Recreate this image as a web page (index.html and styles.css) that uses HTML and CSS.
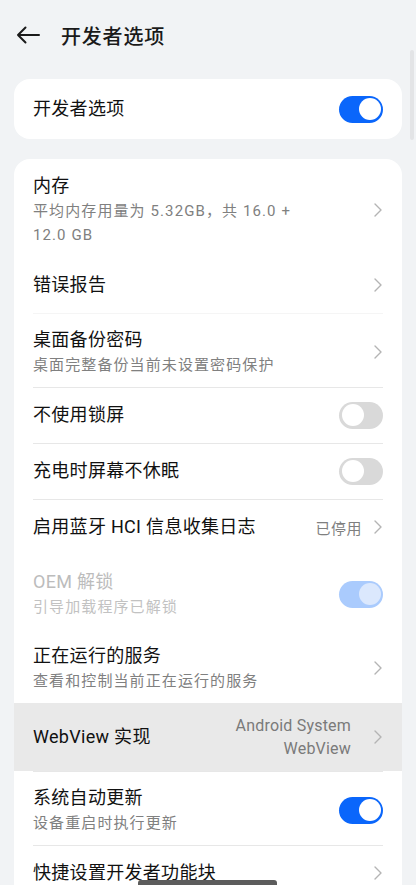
FILE: index.html
```html
<!DOCTYPE html>
<html lang="zh-CN">
<head>
    <meta charset="UTF-8">
    <meta name="viewport" content="width=device-width, initial-scale=1.0">
    <title>开发者选项</title>
    <link rel="stylesheet" href="styles.css">
</head>
<body>
    <header class="topbar">
        <svg class="back" width="24" height="18" viewBox="0 0 24 18">
            <path d="M23 9H2M9.5 1.5L2 9l7.5 7.5" fill="none" stroke="#1a1a1a" stroke-width="2" stroke-linecap="round" stroke-linejoin="round"/>
        </svg>
        <h1>开发者选项</h1>
    </header>

    <main>
        <!-- Master switch -->
        <section class="card">
            <div class="row single">
                <div class="text"><div class="title">开发者选项</div></div>
                <span class="switch on"></span>
            </div>
        </section>

        <!-- Options list -->
        <section class="card">
            <div class="row double">
                <div class="text">
                    <div class="title">内存</div>
                    <div class="sub">平均内存用量为 5.32GB，共 16.0 +<br>12.0 GB</div>
                </div>
                <span class="chev"></span>
            </div>
            <div class="row single">
                <div class="text"><div class="title">错误报告</div></div>
                <span class="chev"></span>
            </div>
            <div class="row double line faint">
                <div class="text">
                    <div class="title">桌面备份密码</div>
                    <div class="sub">桌面完整备份当前未设置密码保护</div>
                </div>
                <span class="chev"></span>
            </div>
            <div class="row single line">
                <div class="text"><div class="title">不使用锁屏</div></div>
                <span class="switch"></span>
            </div>
            <div class="row single line">
                <div class="text"><div class="title">充电时屏幕不休眠</div></div>
                <span class="switch"></span>
            </div>
            <div class="row single line">
                <div class="text"><div class="title">启用蓝牙 HCI 信息收集日志</div></div>
                <span class="value">已停用</span>
                <span class="chev"></span>
            </div>
            <div class="row double disabled">
                <div class="text">
                    <div class="title">OEM 解锁</div>
                    <div class="sub">引导加载程序已解锁</div>
                </div>
                <span class="switch on dim"></span>
            </div>
            <div class="row double">
                <div class="text">
                    <div class="title">正在运行的服务</div>
                    <div class="sub">查看和控制当前正在运行的服务</div>
                </div>
                <span class="chev"></span>
            </div>
            <div class="row pressed">
                <div class="text"><div class="title">WebView 实现</div></div>
                <span class="value multi">Android System<br>WebView</span>
                <span class="chev"></span>
            </div>
            <div class="row double line">
                <div class="text">
                    <div class="title">系统自动更新</div>
                    <div class="sub">设备重启时执行更新</div>
                </div>
                <span class="switch on"></span>
            </div>
            <div class="row single line">
                <div class="text"><div class="title">快捷设置开发者功能块</div></div>
                <span class="chev"></span>
            </div>
        </section>
    </main>

    <div class="scrollbar"></div>
    <div class="home-bar"></div>
</body>
</html>
```

FILE: styles.css
```css
/* Page */
html, body {
    height: 100%;
}

body {
    margin: 0;
    background: #f1f3f5;
    font-family: Roboto, "Noto Sans CJK SC", sans-serif;
    color: #111;
    overflow: hidden;
    position: relative;
}

/* Top bar */
.topbar {
    display: flex;
    align-items: center;
    height: 70px;
    padding: 0 16px;
    gap: 21px;
}

.topbar .back {
    flex: none;
}

.topbar h1 {
    margin: 0;
    font-size: 20px;
    font-weight: 500;
    letter-spacing: 0.8px;
    color: #1a1a1a;
}

main {
    padding: 9px 14px 0 14px;
    display: flex;
    flex-direction: column;
    gap: 20px;
}

/* Cards */
.card {
    background: #fff;
    border-radius: 16px;
    overflow: hidden;
}

.row {
    display: flex;
    align-items: center;
    padding: 0 19px;
    position: relative;
}

.row.single {
    min-height: 56px;
}

.row.double {
    padding-top: 14px;
    padding-bottom: 10px;
}

.row.pressed {
    background: #e9e9e9;
    padding-top: 11px;
    padding-bottom: 11px;
}

.row.line::before {
    content: "";
    position: absolute;
    top: 0;
    left: 19px;
    right: 19px;
    border-top: 1px solid #e7e7e7;
}

.row.line.faint::before {
    border-top-color: #f5f5f5;
}

.card:first-child .row.single {
    min-height: 60px;
}

.text {
    flex: 1;
    min-width: 0;
}

.title {
    font-size: 18px;
    line-height: 26px;
    letter-spacing: 0.3px;
}

.sub {
    font-size: 15px;
    line-height: 24px;
    letter-spacing: 1.1px;
    color: #808080;
}

.row.disabled .title {
    color: #bcbcbc;
}

.row.disabled .sub {
    color: #c2c2c2;
}

.value {
    font-size: 15px;
    color: #7f7f7f;
    margin-right: 12px;
    letter-spacing: 0.5px;
}

.value.multi {
    text-align: right;
    font-size: 16px;
    line-height: 23px;
    letter-spacing: 0.2px;
    margin-right: 23px;
    color: #7a7a7a;
}

/* Chevron */
.chev {
    flex: none;
    width: 8px;
    height: 14px;
    margin-right: 1px;
    background: no-repeat center / 8px 14px url("data:image/svg+xml;utf8,<svg xmlns='http://www.w3.org/2000/svg' width='8' height='14' viewBox='0 0 8 14'><path d='M1 1l6 6-6 6' fill='none' stroke='%23b4b4b4' stroke-width='1.4' stroke-linecap='round' stroke-linejoin='round'/></svg>");
}

/* Switch */
.switch {
    flex: none;
    width: 44px;
    height: 27px;
    border-radius: 14px;
    background: #d9d9d9;
    position: relative;
}

.switch::after {
    content: "";
    position: absolute;
    top: 2.5px;
    left: 3px;
    width: 22px;
    height: 22px;
    border-radius: 50%;
    background: #fff;
}

.switch.on {
    background: #0a66fb;
}

.switch.on::after {
    left: auto;
    right: 2.5px;
}

.switch.on.dim {
    background: #aacbfd;
}

.switch.on.dim::after {
    background: #dbe8fd;
}

/* Overlays */
.scrollbar {
    position: absolute;
    top: 50px;
    right: 2px;
    width: 4px;
    height: 90px;
    border-radius: 2px;
    background: #e3e4e6;
}

.home-bar {
    position: absolute;
    bottom: 0;
    left: 138px;
    width: 139px;
    height: 5px;
    border-radius: 3px 3px 0 0;
    background: #5c5c5c;
}
```
